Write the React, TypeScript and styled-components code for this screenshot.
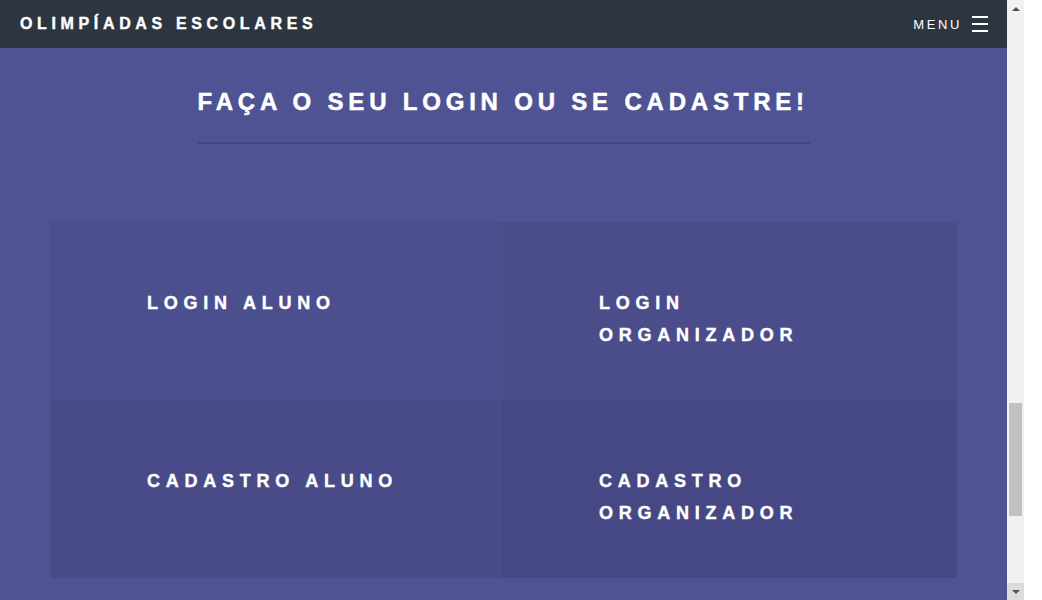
import React from "react";
import styled, { createGlobalStyle } from "styled-components";

const Global = createGlobalStyle`
  html, body { margin: 0; padding: 0; background: #ffffff; }
  body { font-family: "Liberation Sans", Arial, sans-serif; overflow: hidden; }
  * { box-sizing: border-box; }
`;

const Window = styled.div`
  display: flex;
  width: 1042px;
  height: 600px;
  overflow: hidden;
  background: #ffffff;
`;

const Page = styled.div`
  width: 1007px;
  height: 600px;
  display: flex;
  flex-direction: column;
  background: #505393;
`;

const NavBar = styled.nav`
  height: 48px;
  flex: none;
  background: #2d3640;
  display: flex;
  align-items: center;
  justify-content: space-between;
  padding: 0 19px 0 20px;
`;

const Brand = styled.div`
  color: #ffffff;
  font-weight: 700;
  font-size: 16px;
  letter-spacing: 0.29em;
  white-space: nowrap;
  -webkit-text-stroke: 0.4px #ffffff;
`;

const MenuButton = styled.div`
  display: flex;
  align-items: center;
  gap: 10px;
  color: #ffffff;
  font-size: 13px;
  letter-spacing: 0.2em;
`;

const Burger = styled.div`
  width: 16px;
  display: flex;
  flex-direction: column;
  gap: 5px;
  span {
    display: block;
    height: 2px;
    background: #ffffff;
  }
`;

const Section = styled.section`
  display: flex;
  flex-direction: column;
  align-items: center;
  padding-top: 40px;
`;

const Heading = styled.h2`
  margin: 0;
  width: 612px;
  padding-bottom: 26px;
  border-bottom: 2px solid #44477f;
  color: #ffffff;
  font-size: 24px;
  font-weight: 700;
  letter-spacing: 0.2em;
  line-height: 28px;
  white-space: nowrap;
  -webkit-text-stroke: 0.5px #ffffff;
`;

const Grid = styled.div`
  margin-top: 78px;
  width: 907px;
  display: grid;
  grid-template-columns: 452px 455px;
  border-radius: 3px;
  overflow: hidden;
`;

const Cell = styled.a<{ $shade: number }>`
  display: block;
  height: 178px;
  padding: 65px 80px 0 97px;
  background: rgba(20, 20, 60, ${(p) => p.$shade});
  color: #ffffff;
  text-decoration: none;
  font-weight: 700;
  font-size: 18px;
  line-height: 32px;
  letter-spacing: 0.32em;
  -webkit-text-stroke: 0.4px #ffffff;
`;

const Scrollbar = styled.div`
  width: 17px;
  height: 600px;
  flex: none;
  background: #f1f1f1;
  display: flex;
  flex-direction: column;
  align-items: center;
`;

const Arrow = styled.div<{ $down?: boolean }>`
  width: 17px;
  height: 17px;
  flex: none;
  display: flex;
  align-items: center;
  justify-content: center;
  background: ${(p) => (p.$down ? "#dcdcdc" : "#f1f1f1")};
  &::after {
    content: "";
    width: 0;
    height: 0;
    border-left: 4px solid transparent;
    border-right: 4px solid transparent;
    ${(p) =>
      p.$down ? "border-top: 4px solid #505050;" : "border-bottom: 4px solid #505050;"}
  }
`;

const Track = styled.div`
  flex: 1;
  width: 17px;
  display: flex;
  flex-direction: column;
  align-items: center;
  padding-top: 386px;
`;

const Thumb = styled.div`
  width: 13px;
  height: 113px;
  background: #c1c1c1;
`;

const cells = [
  { label: "LOGIN ALUNO", shade: 0.06 },
  { label: "LOGIN ORGANIZADOR", shade: 0.09 },
  { label: "CADASTRO ALUNO", shade: 0.13 },
  { label: "CADASTRO ORGANIZADOR", shade: 0.16 },
];

export default function App() {
  return (
    <>
      <Global />
      <Window>
        <Page>
          <NavBar>
            <Brand>OLIMPÍADAS ESCOLARES</Brand>
            <MenuButton>
              MENU
              <Burger>
                <span />
                <span />
                <span />
              </Burger>
            </MenuButton>
          </NavBar>
          <Section>
            <Heading>FAÇA O SEU LOGIN OU SE CADASTRE!</Heading>
            <Grid>
              {cells.map((c) => (
                <Cell key={c.label} href="#" $shade={c.shade}>
                  {c.label}
                </Cell>
              ))}
            </Grid>
          </Section>
        </Page>
        <Scrollbar>
          <Arrow />
          <Track>
            <Thumb />
          </Track>
          <Arrow $down />
        </Scrollbar>
      </Window>
    </>
  );
}
